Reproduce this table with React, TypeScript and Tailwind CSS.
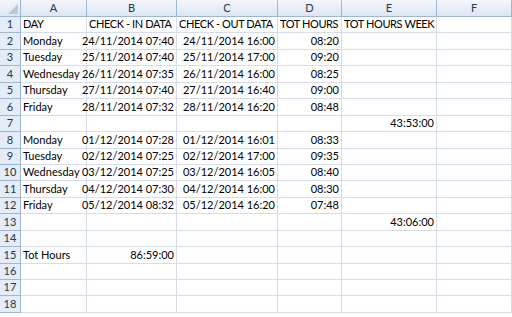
const cols = ["A", "B", "C", "D", "E", "F"];
const widths = ["w-[66px]", "w-[90px]", "w-[101px]", "w-[64px]", "w-[95px]", "w-[75px]"];

type Cell = { t: string; r?: boolean };

const rows: Cell[][] = [
  [{ t: "DAY" }, { t: "CHECK - IN DATA" }, { t: "CHECK - OUT DATA" }, { t: "TOT HOURS" }, { t: "TOT HOURS WEEK" }, { t: "" }],
  [{ t: "Monday" }, { t: "24/11/2014 07:40", r: true }, { t: "24/11/2014 16:00", r: true }, { t: "08:20", r: true }, { t: "" }, { t: "" }],
  [{ t: "Tuesday" }, { t: "25/11/2014 07:40", r: true }, { t: "25/11/2014 17:00", r: true }, { t: "09:20", r: true }, { t: "" }, { t: "" }],
  [{ t: "Wednesday" }, { t: "26/11/2014 07:35", r: true }, { t: "26/11/2014 16:00", r: true }, { t: "08:25", r: true }, { t: "" }, { t: "" }],
  [{ t: "Thursday" }, { t: "27/11/2014 07:40", r: true }, { t: "27/11/2014 16:40", r: true }, { t: "09:00", r: true }, { t: "" }, { t: "" }],
  [{ t: "Friday" }, { t: "28/11/2014 07:32", r: true }, { t: "28/11/2014 16:20", r: true }, { t: "08:48", r: true }, { t: "" }, { t: "" }],
  [{ t: "" }, { t: "" }, { t: "" }, { t: "" }, { t: "43:53:00", r: true }, { t: "" }],
  [{ t: "Monday" }, { t: "01/12/2014 07:28", r: true }, { t: "01/12/2014 16:01", r: true }, { t: "08:33", r: true }, { t: "" }, { t: "" }],
  [{ t: "Tuesday" }, { t: "02/12/2014 07:25", r: true }, { t: "02/12/2014 17:00", r: true }, { t: "09:35", r: true }, { t: "" }, { t: "" }],
  [{ t: "Wednesday" }, { t: "03/12/2014 07:25", r: true }, { t: "03/12/2014 16:05", r: true }, { t: "08:40", r: true }, { t: "" }, { t: "" }],
  [{ t: "Thursday" }, { t: "04/12/2014 07:30", r: true }, { t: "04/12/2014 16:00", r: true }, { t: "08:30", r: true }, { t: "" }, { t: "" }],
  [{ t: "Friday" }, { t: "05/12/2014 08:32", r: true }, { t: "05/12/2014 16:20", r: true }, { t: "07:48", r: true }, { t: "" }, { t: "" }],
  [{ t: "" }, { t: "" }, { t: "" }, { t: "" }, { t: "43:06:00", r: true }, { t: "" }],
  [{ t: "" }, { t: "" }, { t: "" }, { t: "" }, { t: "" }, { t: "" }],
  [{ t: "Tot Hours" }, { t: "86:59:00", r: true }, { t: "" }, { t: "" }, { t: "" }, { t: "" }],
  [{ t: "" }, { t: "" }, { t: "" }, { t: "" }, { t: "" }, { t: "" }],
  [{ t: "" }, { t: "" }, { t: "" }, { t: "" }, { t: "" }, { t: "" }],
  [{ t: "" }, { t: "" }, { t: "" }, { t: "" }, { t: "" }, { t: "" }],
];

export default function App() {
  return (
    <div className="w-[512px] h-[317px] overflow-hidden bg-white text-[11px] text-black" style={{ fontFamily: "Lato, 'Open Sans', sans-serif" }}>
      <div className="flex h-[17px]">
        <div className="w-[21px] shrink-0 border-r border-b border-[#9eb6ce] bg-gradient-to-b from-[#f3f6fb] to-[#dde6f2] flex items-end justify-end p-[2px]">
          <svg width="10" height="10" viewBox="0 0 10 10">
            <polygon points="10,0 10,10 0,10" fill="#b7c8dc" />
          </svg>
        </div>
        {cols.map((c, i) => (
          <div key={c} className={`${widths[i]} shrink-0 border-r border-b border-[#9eb6ce] bg-gradient-to-b from-[#f3f6fb] to-[#dde6f2] flex items-center justify-center text-[#27364a]`}>
            {c}
          </div>
        ))}
      </div>
      {rows.map((row, ri) => (
        <div key={ri} className="flex h-[16.45px]">
          <div className="w-[21px] shrink-0 border-r border-b border-[#9eb6ce] bg-[#e4ecf7] flex items-center justify-center text-[#27364a]">
            {ri + 1}
          </div>
          {row.map((cell, ci) => (
            <div key={ci} className={`${widths[ci]} shrink-0 border-r border-b border-[#d6dce8] flex items-center px-[2px] whitespace-nowrap overflow-visible ${cell.r ? "justify-end" : "justify-start"} ${ri === 0 ? "tracking-[-0.4px]" : ""}`}>
              {cell.t}
            </div>
          ))}
        </div>
      ))}
    </div>
  );
}
